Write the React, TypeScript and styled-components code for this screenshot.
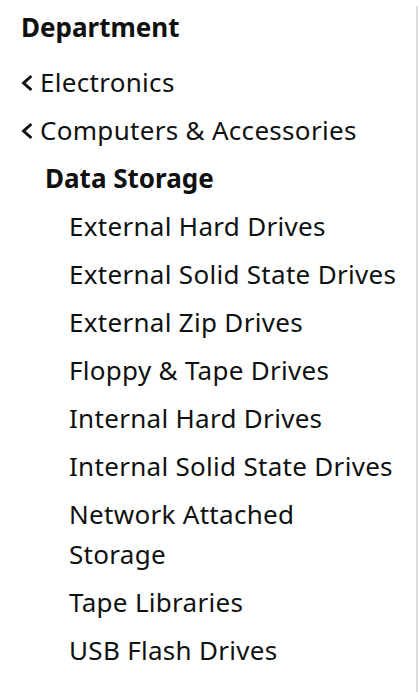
import React from 'react';
import styled, { createGlobalStyle } from 'styled-components';

const GlobalStyle = createGlobalStyle`
  html, body {
    margin: 0;
    padding: 0;
    background: #ffffff;
  }
  body {
    font-family: "Noto Sans", "Open Sans", Arial, sans-serif;
    color: #0f1111;
  }
`;

const Panel = styled.div`
  width: 418px;
  height: 692px;
  box-sizing: border-box;
  padding: 6px 0 0 0;
  display: flex;
`;

const Sidebar = styled.div`
  flex: 1;
  border-right: 2px solid #dcdcdc;
  padding: 4px 6px 0 21px;
  display: flex;
  flex-direction: column;
`;

const Heading = styled.div`
  font-size: 26px;
  font-weight: 700;
  line-height: 34px;
  margin-bottom: 18px;
`;

const List = styled.ul`
  list-style: none;
  margin: 0;
  padding: 0;
  display: flex;
  flex-direction: column;
  gap: 8px;
`;

const Item = styled.li<{ indent: number; bold?: boolean }>`
  font-size: 26px;
  line-height: 40px;
  padding-left: ${(p) => p.indent}px;
  font-weight: ${(p) => (p.bold ? 700 : 400)};
  letter-spacing: ${(p) => (p.bold ? '0' : '0.3px')};
  display: flex;
  align-items: center;
  white-space: pre-line;
`;

const Chevron = styled.svg`
  display: block;
  width: 12px;
  height: 20px;
  min-width: 12px;
  margin-right: 7px;
  margin-top: 2px;
  flex: 0 0 12px;
`;

const Back = () => (
  <Chevron viewBox="0 0 12 20" width="12" height="20">
    <path d="M10.4 3 L2.6 10 L10.4 17" fill="none" stroke="#0f1111" strokeWidth="3" />
  </Chevron>
);

const parents = ['Electronics', 'Computers & Accessories'];
const children = [
  'External Hard Drives',
  'External Solid State Drives',
  'External Zip Drives',
  'Floppy & Tape Drives',
  'Internal Hard Drives',
  'Internal Solid State Drives',
  'Network Attached\nStorage',
  'Tape Libraries',
  'USB Flash Drives',
];

export default function App() {
  return (
    <>
      <GlobalStyle />
      <Panel>
        <Sidebar>
          <Heading>Department</Heading>
          <List>
            {parents.map((p) => (
              <Item key={p} indent={0}>
                <Back />
                {p}
              </Item>
            ))}
            <Item indent={24} bold>
              Data Storage
            </Item>
            {children.map((c) => (
              <Item key={c} indent={48}>
                {c}
              </Item>
            ))}
          </List>
        </Sidebar>
      </Panel>
    </>
  );
}
